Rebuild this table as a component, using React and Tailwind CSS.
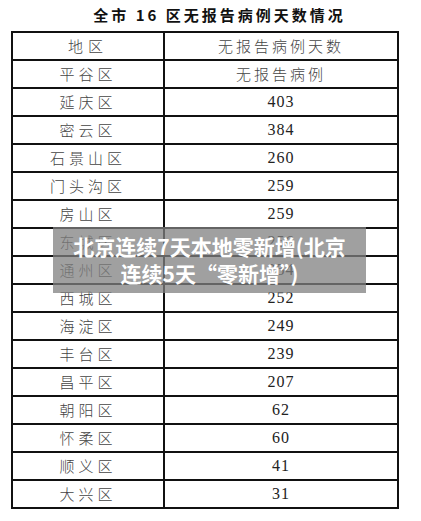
import React from 'react';

const rows = [
  ['平谷区', '无报告病例'],
  ['延庆区', '403'],
  ['密云区', '384'],
  ['石景山区', '260'],
  ['门头沟区', '259'],
  ['房山区', '259'],
  ['东城区', '256'],
  ['通州区', '254'],
  ['西城区', '252'],
  ['海淀区', '249'],
  ['丰台区', '239'],
  ['昌平区', '207'],
  ['朝阳区', '62'],
  ['怀柔区', '60'],
  ['顺义区', '41'],
  ['大兴区', '31'],
];

const cjk = "font-['Noto_Sans_CJK_SC',sans-serif]";
const num = "font-['Liberation_Serif','Noto_Sans_CJK_SC',serif]";

export default function App() {
  return (
    <div className="relative w-[421px] h-[521px] bg-white overflow-hidden">
      <div className="h-[31px] flex items-center justify-center pl-[18px]">
        <span className={`${cjk} font-bold text-[15px] tracking-[3px] text-[#111]`}>
          全市 16 区无报告病例天数情况
        </span>
      </div>
      <table className="ml-[11px] w-[388px] border-collapse">
        <tbody>
          <tr className="h-[28px]">
            <td className={`w-[152px] border-2 border-[#111] text-center ${cjk} font-light text-[15px] tracking-[5px] text-[#444]`}>
              地区
            </td>
            <td className={`border-2 border-[#111] text-center ${cjk} font-light text-[15px] tracking-[3px] text-[#444]`}>
              无报告病例天数
            </td>
          </tr>
          {rows.map(([area, days]) => (
            <tr key={area} className="h-[28px]">
              <td className={`border-2 border-[#111] text-center ${cjk} font-light text-[15px] tracking-[4px] text-[#444]`}>
                {area}
              </td>
              <td
                className={`border-2 border-[#111] text-center text-[#222] ${
                  /\d/.test(days)
                    ? `${num} text-[16px] tracking-[1px]`
                    : `${cjk} font-light text-[15px] tracking-[3px] text-[#444]`
                }`}
              >
                {days}
              </td>
            </tr>
          ))}
        </tbody>
      </table>
      <div className="absolute left-[53px] top-[227px] w-[313px] h-[66px] bg-[rgba(128,128,128,0.75)] flex flex-col items-center justify-center">
        <p className={`${cjk} font-bold text-[21px] leading-[27px] text-white text-center`}>
          北京连续7天本地零新增(北京
        </p>
        <p className={`${cjk} font-bold text-[21px] leading-[27px] text-white text-center`}>
          连续5天“零新增”)
        </p>
      </div>
    </div>
  );
}
